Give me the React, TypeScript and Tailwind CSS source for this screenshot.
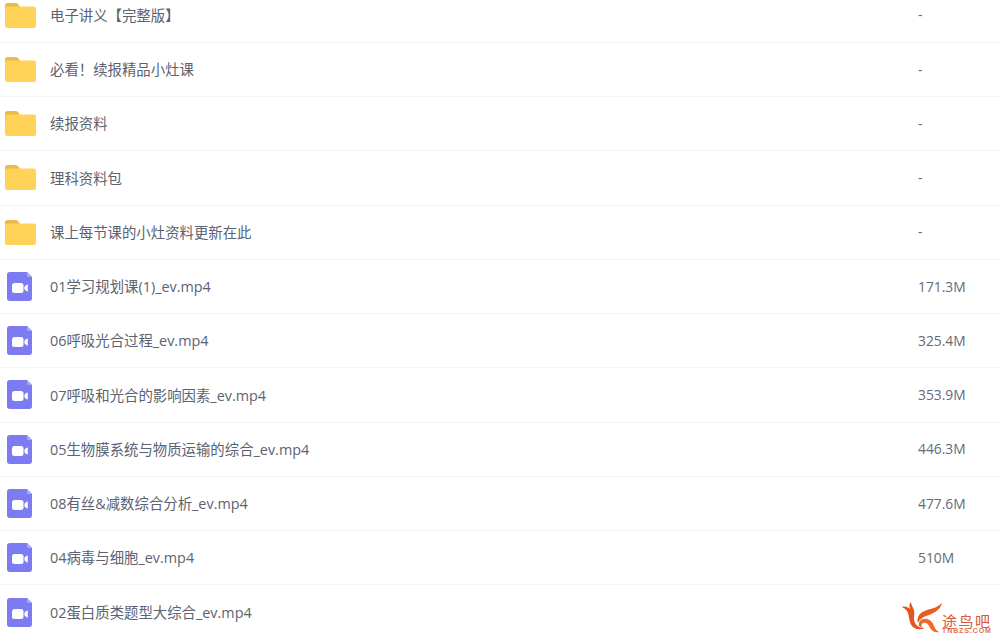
const rows: [string, string, boolean][] = [
  ["电子讲义【完整版】", "-", true],
  ["必看！续报精品小灶课", "-", true],
  ["续报资料", "-", true],
  ["理科资料包", "-", true],
  ["课上每节课的小灶资料更新在此", "-", true],
  ["01学习规划课(1)_ev.mp4", "171.3M", false],
  ["06呼吸光合过程_ev.mp4", "325.4M", false],
  ["07呼吸和光合的影响因素_ev.mp4", "353.9M", false],
  ["05生物膜系统与物质运输的综合_ev.mp4", "446.3M", false],
  ["08有丝&减数综合分析_ev.mp4", "477.6M", false],
  ["04病毒与细胞_ev.mp4", "510M", false],
  ["02蛋白质类题型大综合_ev.mp4", "", false],
];

function FolderIcon() {
  return (
    <svg width="31" height="25" viewBox="0 0 31 25" className="block">
      <path d="M0 2.500C0 1 1 0 2.500 0h8c1.500 0 2.500 .8 3.200 2L15 4H4v3H0z" fill="#e9bb47" />
      <path d="M0 5.500C0 4.300 .9 3.500 2 3.500h27c1.100 0 2 .8 2 2V23c0 1.100-.9 2-2 2H2c-1.100 0-2-.9-2-2z" fill="#ffd258" />
    </svg>
  );
}

function VideoIcon() {
  return (
    <svg width="25" height="29" viewBox="0 0 25 29" className="block">
      <path d="M2.500 0H20l5 5V26.500c0 1.400-1.100 2.500-2.500 2.500H2.500C1.100 29 0 27.900 0 26.500V2.500C0 1.100 1.100 0 2.500 0z" fill="#7d7bf2" />
      <path d="M20 0l5 5H21.500c-.9 0-1.500-.6-1.500-1.500z" fill="#a9a7f9" />
      <rect x="5" y="11" width="11.500" height="10" rx="2.500" fill="#ffffff" />
      <path d="M17.500 14.500l2.500-2c.4-.3.800 0 .8.400v6.200c0 .4-.4.700-.8.400l-2.500-2z" fill="#ffffff" />
    </svg>
  );
}

function Logo() {
  return (
    <div className="absolute left-[902px] top-[602px] flex items-start">
      <svg width="40" height="32" viewBox="0 0 40 32" className="block">
        <path d="M0 5C3 4 6 5 8 7C7 4 7 2 9 0C9 3 11 5 12 8C13 12 11 17 13 21C15 25 19 26 23 26C17 29 10 27 8 20C6 14 8 9 0 5Z" fill="#e8541c" />
        <path d="M40 1C38 9 30 12 24 14C20 15.500 17 18 16 21C14 15 18 10 25 8C31 6.500 36 5 40 1Z" fill="#ea5c20" />
        <path d="M17 24C16 19 20 16 25 17C29 18 31 21 32 24C33 27 35 29 37 30C32 31 29 28 27 24C26 21 23 20 21 21C19 22 19 25 21 26Z" fill="#ee6a26" />
      </svg>
      <div className="mt-[12px] flex flex-col items-center">
        <span className="text-[15px] leading-[14px] tracking-[1.500px] text-[#d9583a] font-['Noto_Sans_CJK_SC',sans-serif]">途鸟吧</span>
        <span className="text-[7px] leading-[6px] font-bold tracking-[0.900px] text-[#e0744e] font-['Liberation_Sans',sans-serif]">TNBZS.COM</span>
      </div>
    </div>
  );
}

export default function App() {
  return (
    <div className="relative w-[1000px] h-[639px] overflow-hidden bg-white font-['Noto_Sans_CJK_SC',sans-serif]">
      <div className="-mt-[11.500px] flex flex-col">
        {rows.map(([name, size, folder]) => (
          <div key={name} className="flex h-[54.270px] shrink-0 items-center border-b border-[#f3f4f6] text-[#5c6370]">
            <div className="flex w-[50px] shrink-0 pl-[5px] pr-[14px]">
              {folder ? <FolderIcon /> : <span className="pl-[2px]"><VideoIcon /></span>}
            </div>
            <div className="w-[868px] shrink-0 pt-[1px] text-[14.400px] font-['Open_Sans','Noto_Sans_CJK_SC',sans-serif]">{name}</div>
            <div className="pt-[1px] text-[13.800px] text-[#666b75] font-['Open_Sans','Noto_Sans_CJK_SC',sans-serif]">{size}</div>
          </div>
        ))}
      </div>
      <Logo />
    </div>
  );
}
